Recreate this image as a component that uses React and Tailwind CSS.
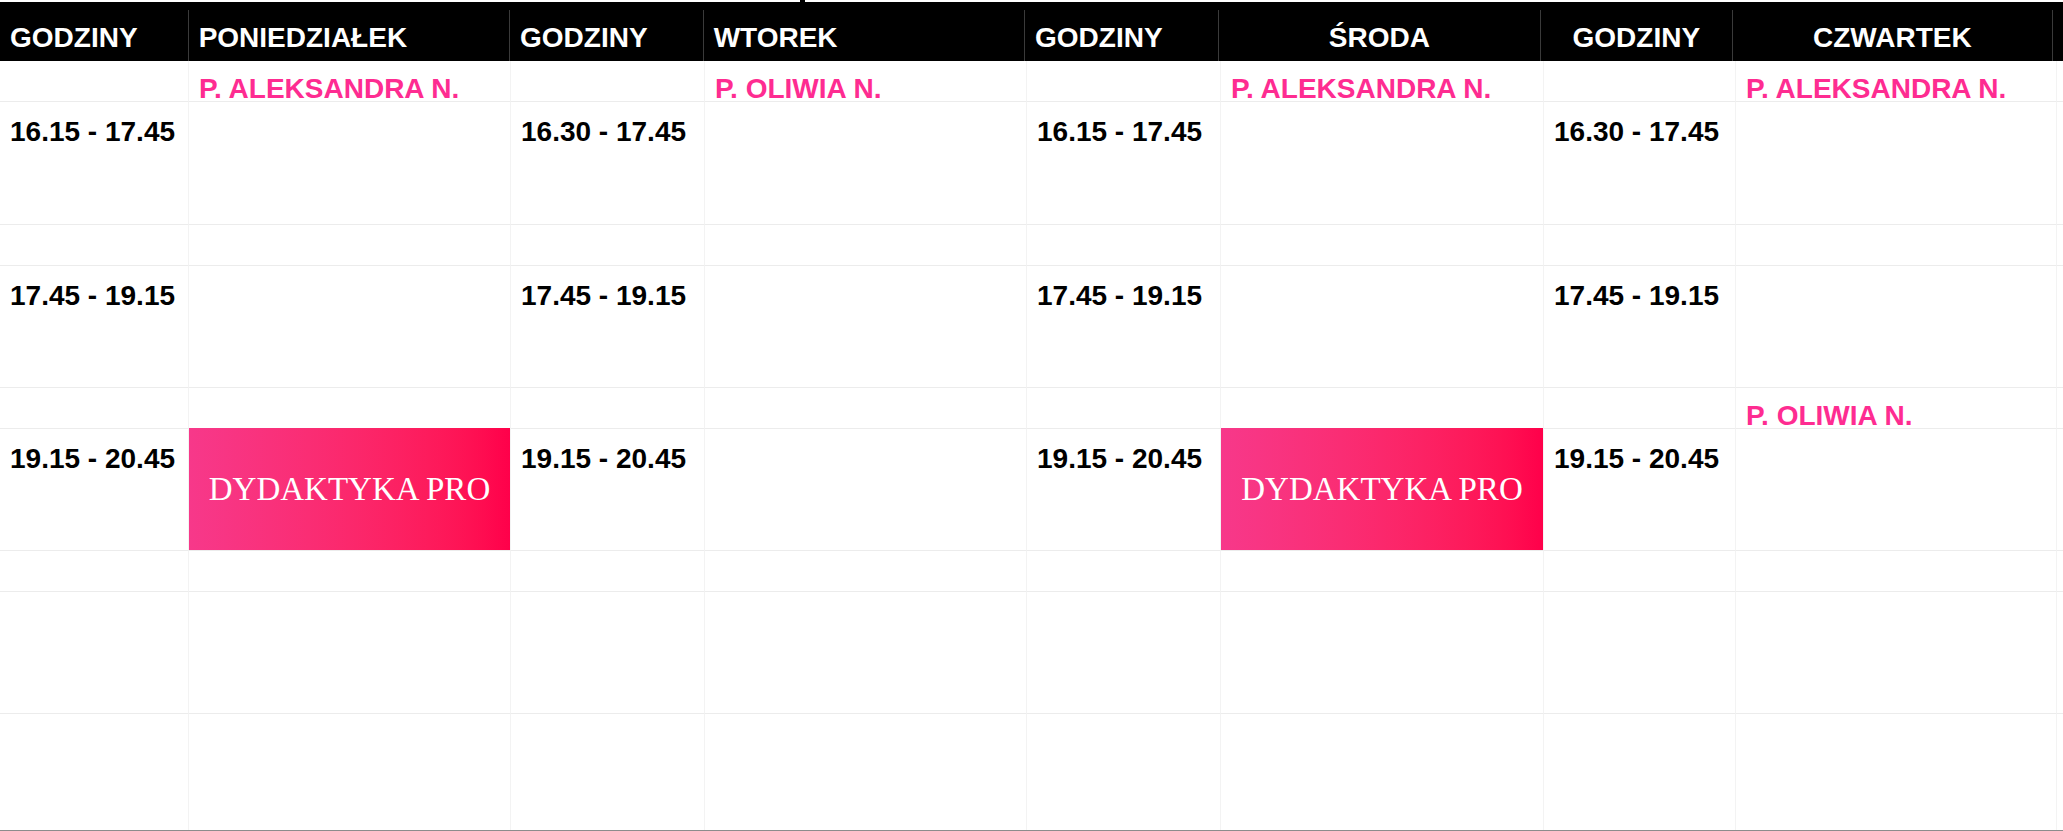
import React from "react";

const SANS = "font-['Liberation_Sans',Arial,sans-serif]";

// nagłówki kolumn
const COLS = [
  { head: "GODZINY", center: false },
  { head: "PONIEDZIAŁEK", center: false },
  { head: "GODZINY", center: false },
  { head: "WTOREK", center: false },
  { head: "GODZINY", center: false },
  { head: "ŚRODA", center: true },
  { head: "GODZINY", center: true },
  { head: "CZWARTEK", center: true },
  { head: "", center: false },
];

const HEAD_W = [
  "w-[189px]",
  "w-[322px]",
  "w-[194px]",
  "w-[322px]",
  "w-[194px]",
  "w-[323px]",
  "w-[192px]",
  "w-[321px]",
  "flex-1",
];

const ROW_H = [
  "h-[41px]",
  "h-[123px]",
  "h-[41px]",
  "h-[122px]",
  "h-[41px]",
  "h-[122px]",
  "h-[41px]",
  "h-[122px]",
  "h-[116px]",
];

// treść komórek: [wiersz]-[kolumna]
const CELLS = {
  "0-1": { type: "name", text: "P. ALEKSANDRA N." },
  "0-3": { type: "name", text: "P. OLIWIA N." },
  "0-5": { type: "name", text: "P. ALEKSANDRA N." },
  "0-7": { type: "name", text: "P. ALEKSANDRA N." },
  "1-0": { type: "time", text: "16.15 - 17.45" },
  "1-2": { type: "time", text: "16.30 - 17.45" },
  "1-4": { type: "time", text: "16.15 - 17.45" },
  "1-6": { type: "time", text: "16.30 - 17.45" },
  "3-0": { type: "time", text: "17.45 - 19.15" },
  "3-2": { type: "time", text: "17.45 - 19.15" },
  "3-4": { type: "time", text: "17.45 - 19.15" },
  "3-6": { type: "time", text: "17.45 - 19.15" },
  "4-7": { type: "name", text: "P. OLIWIA N." },
  "5-0": { type: "time", text: "19.15 - 20.45" },
  "5-1": { type: "lesson", text: "DYDAKTYKA PRO" },
  "5-2": { type: "time", text: "19.15 - 20.45" },
  "5-4": { type: "time", text: "19.15 - 20.45" },
  "5-5": { type: "lesson", text: "DYDAKTYKA PRO" },
  "5-6": { type: "time", text: "19.15 - 20.45" },
};

function Cell({ cell }) {
  if (!cell) return null;
  if (cell.type === "lesson") {
    return (
      <div className="flex h-full w-full items-center justify-center bg-linear-to-r from-[#f7388a] to-[#ff004a]">
        <span className="font-['Liberation_Serif','Times_New_Roman',serif] text-[33px] leading-none text-white">
          {cell.text}
        </span>
      </div>
    );
  }
  const style =
    cell.type === "name"
      ? "text-[#fe2c91] pt-[14px]"
      : "text-black pt-[16px]";
  return (
    <div
      className={`${SANS} ${style} pl-[10px] text-[28px] font-bold leading-none whitespace-nowrap`}
    >
      {cell.text}
    </div>
  );
}

export default function App() {
  return (
    <div className="relative h-[831px] w-[2063px] overflow-hidden bg-white">
      {/* górny pasek */}
      <div className="flex h-[2px]">
        <div className="ml-[800px] h-full w-[5px] bg-black" />
      </div>

      {/* nagłówek */}
      <div className="flex h-[59px] bg-black">
        {COLS.map((c, i) => (
          <div
            key={i}
            className={`${HEAD_W[i]} mt-2 ${
              i < 8 ? "border-r border-[#3a3a3a]" : ""
            } ${c.center ? "text-center" : "pl-[10px]"} ${SANS} pt-[14px] text-[28px] font-bold leading-none text-white whitespace-nowrap`}
          >
            {c.head}
          </div>
        ))}
      </div>

      {/* siatka */}
      <div className="border-b-2 border-[#8c8c8c]">
        {ROW_H.map((h, r) => (
          <div key={r} className={`flex ${h}`}>
            {COLS.map((_, c) => {
              const cell = CELLS[`${r}-${c}`];
              const lesson = cell?.type === "lesson";
              return (
                <div
                  key={c}
                  className={`${HEAD_W[c]} ${
                    r < ROW_H.length - 1 ? "border-b border-b-[#ececec]" : ""
                  } ${c < 8 ? "border-r border-r-[#f3f3f3]" : ""} ${
                    lesson ? "-mt-px" : ""
                  }`}
                >
                  <Cell cell={cell} />
                </div>
              );
            })}
          </div>
        ))}
      </div>
    </div>
  );
}
